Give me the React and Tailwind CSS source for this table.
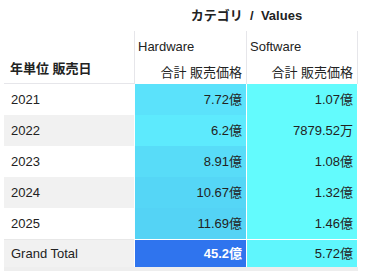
import React from 'react';

const rows = [
  { year: '2021', hw: '7.72億', sw: '1.07億', hwBg: 'bg-[#5be2fb]', bg: 'bg-white' },
  { year: '2022', hw: '6.2億', sw: '7879.52万', hwBg: 'bg-[#5deafd]', bg: 'bg-[#f1f1f1]' },
  { year: '2023', hw: '8.91億', sw: '1.08億', hwBg: 'bg-[#58dcf8]', bg: 'bg-white' },
  { year: '2024', hw: '10.67億', sw: '1.32億', hwBg: 'bg-[#55d6f6]', bg: 'bg-[#f1f1f1]' },
  { year: '2025', hw: '11.69億', sw: '1.46億', hwBg: 'bg-[#54d3f5]', bg: 'bg-white' },
];

const App = () => {
  return (
    <div
      className="w-[365px] h-[275px] bg-white text-[13px] text-[#222] pl-1"
      style={{ fontFamily: '"Liberation Sans", "Noto Sans CJK JP", sans-serif' }}
    >
      {/* Column dimension title */}
      <div className="flex h-[31px]">
        <div className="w-[131px]" />
        <div className="w-[223px] flex items-center justify-center font-bold">
          カテゴリ&nbsp;&nbsp;/&nbsp;&nbsp;Values
        </div>
      </div>

      {/* Header */}
      <div className="flex h-[53px]">
        <div className="w-[130px] border-b border-[#e6e6ea] flex items-end pb-[5px] pl-[6px] font-bold">
          年単位 販売日
        </div>
        <div className="w-[112px] border-l-[1px] border-[#e6e6ea] flex flex-col">
          <div className="h-[31px] flex items-center pl-[3px]">Hardware</div>
          <div className="flex-1 flex items-center justify-end pr-[4px]">合計 販売価格</div>
        </div>
        <div className="w-[112px] border-l-[1px] border-r-[1px] border-[#e6e6ea] flex flex-col">
          <div className="h-[31px] flex items-center pl-[3px]">Software</div>
          <div className="flex-1 flex items-center justify-end pr-[4px]">合計 販売価格</div>
        </div>
      </div>

      {/* Data rows */}
      {rows.map((r) => (
        <div key={r.year} className="flex h-[31px]">
          <div className={`w-[130px] ${r.bg} flex items-center pl-[7px]`}>{r.year}</div>
          <div className={`w-[112px] border-l-[1px] border-white ${r.hwBg} flex items-center justify-end pr-[4px]`}>
            {r.hw}
          </div>
          <div className="w-[112px] border-l-[1px] border-r-[1px] border-white bg-[#63fbfd] flex items-center justify-end pr-[4px]">
            {r.sw}
          </div>
        </div>
      ))}

      {/* Grand total */}
      <div className="flex h-[32px] border-b-[4px] border-[#eeeeee] w-[354px]">
        <div className="w-[130px] bg-[#f1f1f1] border-t border-[#e8e8e8] flex items-center pl-[7px] font-medium">
          Grand Total
        </div>
        <div className="w-[112px] border-l-[1px] border-t border-white bg-[#2f74ee] text-white font-bold flex items-center justify-end pr-[4px]">
          45.2億
        </div>
        <div className="w-[112px] border-l-[1px] border-r-[1px] border-t border-white bg-[#5ff6fd] flex items-center justify-end pr-[4px]">
          5.72億
        </div>
      </div>
    </div>
  );
};

export default App;
